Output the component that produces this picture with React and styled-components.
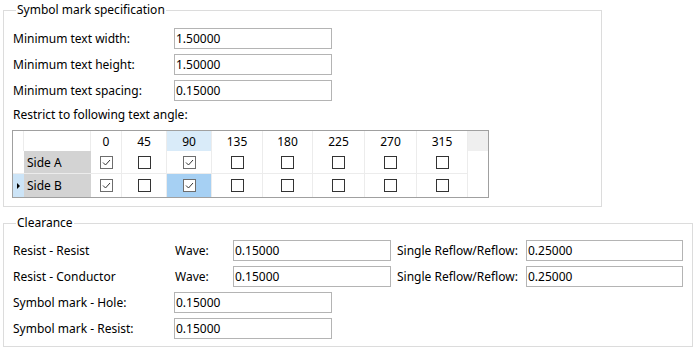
import React from "react";
import styled, { createGlobalStyle } from "styled-components";

const GlobalStyle = createGlobalStyle`
  html, body {
    margin: 0;
    padding: 0;
    background: #ffffff;
  }
  body {
    font-family: "Noto Sans", "Liberation Sans", sans-serif;
    font-size: 12px;
    color: #000000;
  }
`;

const Page = styled.div`
  width: 700px;
  height: 350px;
  padding: 2px 0 0 3px;
  box-sizing: border-box;
  display: flex;
  flex-direction: column;
  gap: 8px;
`;

const Group = styled.fieldset`
  box-sizing: border-box;
  width: ${(p) => p.width}px;
  margin: 0;
  border: 1px solid #dcdcdc;
  padding: ${(p) => p.padTop}px 9px ${(p) => p.padBottom}px 9px;
  display: flex;
  flex-direction: column;
  gap: 5px;
`;

const Legend = styled.legend`
  padding: 0 1px;
  margin-left: 3px;
  line-height: 16px;
`;

const Row = styled.div`
  display: flex;
  align-items: center;
  height: 21px;
`;

const Label = styled.span`
  width: ${(p) => p.width}px;
  flex-shrink: 0;
  white-space: nowrap;
`;

const Field = styled.div`
  box-sizing: border-box;
  width: ${(p) => p.width || 158}px;
  height: 21px;
  border: 1px solid #b4b4b4;
  padding-left: 1px;
  display: flex;
  align-items: center;
  margin-right: ${(p) => p.gap || 0}px;
`;

const Caption = styled.div`
  line-height: 16px;
  margin-top: 1px;
  margin-bottom: 2px;
`;

const Grid = styled.div`
  margin-left: -1px;
  width: 477px;
  box-sizing: border-box;
  border: 1px solid #a0a0a0;
  display: grid;
  grid-template-columns: 11px 67px 31px 45px 45px 51px 50px 52px 52px 51px 20px;
  grid-template-rows: 20px 23px 23px;
`;

const Cell = styled.div`
  display: flex;
  align-items: center;
  justify-content: ${(p) => (p.left ? "flex-start" : "center")};
  padding-left: ${(p) => (p.left ? 3 : 0)}px;
  background: ${(p) => p.bg || "#ffffff"};
  border-right: ${(p) => (p.line ? "1px solid #ececec" : "none")};
  border-bottom: ${(p) => (p.under ? "1px solid #ececec" : "none")};
  box-sizing: border-box;
`;

const Box = styled.span`
  width: 13px;
  height: 13px;
  box-sizing: border-box;
  border: 1px solid ${(p) => (p.checked ? "#6d6d6d" : "#333333")};
  background: #ffffff;
  display: flex;
  align-items: center;
  justify-content: center;
`;

const Arrow = styled.span`
  width: 0;
  height: 0;
  border-top: 3px solid transparent;
  border-bottom: 3px solid transparent;
  border-left: 3px solid #000000;
`;

const angles = [0, 45, 90, 135, 180, 225, 270, 315];
const sides = [
  { name: "Side A", checked: [0, 90], current: false },
  { name: "Side B", checked: [0, 90], current: true },
];

const Check = ({ checked }) => (
  <Box checked={checked}>
    {checked && (
      <svg width="11" height="11" viewBox="0 0 11 11">
        <path d="M2 5.5 L4.5 8 L9 3" fill="none" stroke="#333" strokeWidth="1" />
      </svg>
    )}
  </Box>
);

export default function App() {
  return (
    <>
      <GlobalStyle />
      <Page>
        <Group width={599} padTop={10} padBottom={8}>
          <Legend>Symbol mark specification</Legend>
          <Row>
            <Label width={161}>Minimum text width:</Label>
            <Field>1.50000</Field>
          </Row>
          <Row>
            <Label width={161}>Minimum text height:</Label>
            <Field>1.50000</Field>
          </Row>
          <Row>
            <Label width={161}>Minimum text spacing:</Label>
            <Field>0.15000</Field>
          </Row>
          <Caption>Restrict to following text angle:</Caption>
          <Grid>
            <Cell line />
            <Cell line />
            {angles.map((a) => (
              <Cell key={a} line bg={a === 90 ? "#d9ebf9" : undefined}>
                {a}
              </Cell>
            ))}
            <Cell bg="#efefef" />
            {sides.map((s, r) => (
              <React.Fragment key={s.name}>
                <Cell under={r === 0} bg={s.current ? "#cce4f7" : undefined}>
                  {s.current && <Arrow />}
                </Cell>
                <Cell left under={r === 0} bg="#d3d3d3">
                  {s.name}
                </Cell>
                {angles.map((a) => (
                  <Cell
                    key={a}
                    line
                    under={r === 0}
                    bg={s.current && a === 90 ? "#a6d0f3" : undefined}
                  >
                    <Check checked={s.checked.includes(a)} />
                  </Cell>
                ))}
                <Cell />
              </React.Fragment>
            ))}
          </Grid>
        </Group>
        <Group width={690} padTop={9} padBottom={7}>
          <Legend>Clearance</Legend>
          <Row>
            <Label width={162}>Resist - Resist</Label>
            <Label width={58}>Wave:</Label>
            <Field gap={6}>0.15000</Field>
            <Label width={129}>Single Reflow/Reflow:</Label>
            <Field width={157}>0.25000</Field>
          </Row>
          <Row>
            <Label width={162}>Resist - Conductor</Label>
            <Label width={58}>Wave:</Label>
            <Field gap={6}>0.15000</Field>
            <Label width={129}>Single Reflow/Reflow:</Label>
            <Field width={157}>0.25000</Field>
          </Row>
          <Row>
            <Label width={161}>Symbol mark - Hole:</Label>
            <Field>0.15000</Field>
          </Row>
          <Row>
            <Label width={161}>Symbol mark - Resist:</Label>
            <Field>0.15000</Field>
          </Row>
        </Group>
      </Page>
    </>
  );
}
